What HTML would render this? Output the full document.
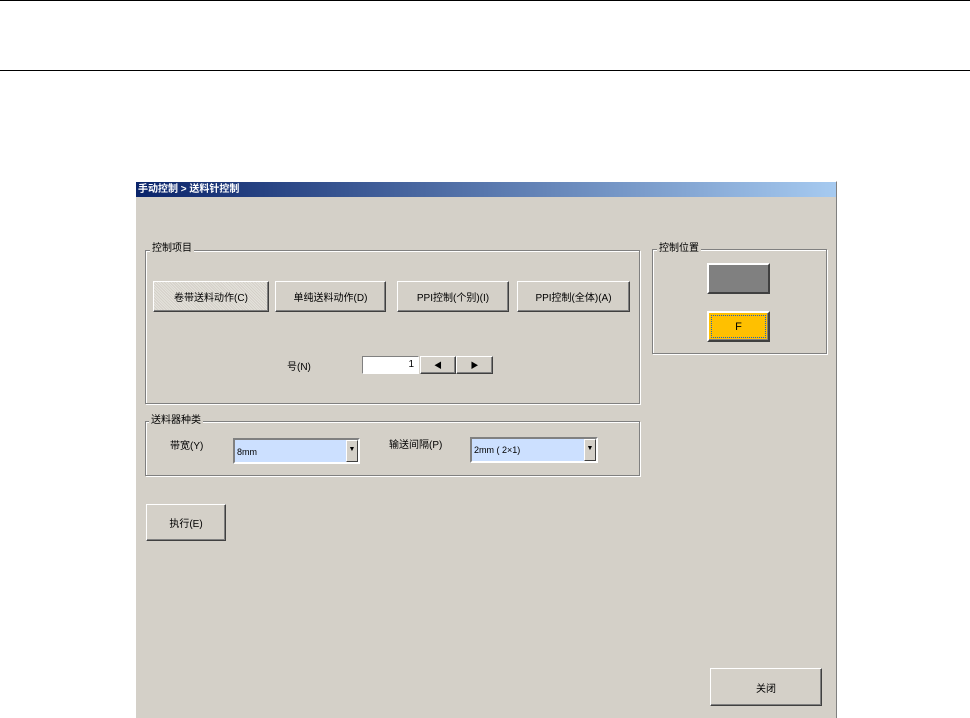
<!DOCTYPE html>
<html><head><meta charset="utf-8"><style>
*{margin:0;padding:0;box-sizing:border-box}
body{width:970px;height:718px;background:#fff;position:relative;overflow:hidden;font-family:"Liberation Sans","Noto Sans CJK SC",sans-serif;font-size:10px;color:#000}
.a{position:absolute}
.win{left:135px;top:181px;width:702px;height:537px;background:#d4d0c8;border-left:1px solid #fff;border-top:1px solid #fff;border-right:1px solid #808080}
.title{left:136px;top:182px;width:700px;height:15px;background:linear-gradient(90deg,#0a246a,#a6caf0);color:#fff;font-weight:bold;font-size:10px;line-height:15px;padding-left:2px}
.grp{border:1px solid #808080;box-shadow:1px 1px 0 #fff inset,1px 1px 0 #fff}
.lbl{background:#d4d0c8;padding:0 2px;line-height:12px}
.btn{background:#d4d0c8;border:1px solid;border-color:#fff #404040 #404040 #fff;box-shadow:inset -1px -1px 0 #808080;display:flex;align-items:center;justify-content:center;font-size:10px}
.combo{background:#cce0ff;border:2px solid;border-color:#808080 #fff #fff #808080;font-size:9px;line-height:20px;padding-left:2px}
.dd{position:absolute;right:0;top:0;width:12px;height:100%;background:#d4d0c8;border:1px solid;border-color:#fff #404040 #404040 #fff;font-size:7px;text-align:center;line-height:18px}
</style></head><body>
<div class="a" style="left:0;top:0;width:970px;height:1px;background:#000"></div>
<div class="a" style="left:0;top:70px;width:970px;height:1px;background:#000"></div>
<div class="a win"></div>
<div class="a title">手动控制 &gt; 送料针控制</div>

<div class="a grp" style="left:145px;top:250px;width:495px;height:154px"></div>
<div class="a lbl" style="left:150px;top:243px">控制项目</div>
<div class="a btn" style="left:153px;top:281px;width:116px;height:31px;background:repeating-linear-gradient(45deg,#e4e2dc 0 1px,#d4d0c8 1px 2px)">卷带送料动作(C)</div>
<div class="a btn" style="left:275px;top:281px;width:111px;height:31px">单纯送料动作(D)</div>
<div class="a btn" style="left:397px;top:281px;width:112px;height:31px">PPI控制(个别)(I)</div>
<div class="a btn" style="left:517px;top:281px;width:113px;height:31px">PPI控制(全体)(A)</div>
<div class="a" style="left:287px;top:358px">号(N)</div>
<div class="a" style="left:362px;top:356px;width:57px;height:18px;background:#fff;border:1px solid;border-color:#808080 #fff #fff #808080;text-align:right;padding-right:4px;line-height:15px">1</div>
<div class="a btn" style="left:420px;top:356px;width:36px;height:18px;font-size:8px">◀</div>
<div class="a btn" style="left:456px;top:356px;width:37px;height:18px;font-size:8px">▶</div>

<div class="a grp" style="left:145px;top:421px;width:495px;height:55px"></div>
<div class="a lbl" style="left:149px;top:415px">送料器种类</div>
<div class="a" style="left:170px;top:437px">带宽(Y)</div>
<div class="a combo" style="left:233px;top:438px;width:127px;height:26px;line-height:24px">8mm<div class="dd">▼</div></div>
<div class="a" style="left:389px;top:436px">输送间隔(P)</div>
<div class="a combo" style="left:470px;top:437px;width:128px;height:26px;line-height:22px">2mm ( 2×1)<div class="dd">▼</div></div>

<div class="a btn" style="left:146px;top:504px;width:80px;height:37px">执行(E)</div>

<div class="a grp" style="left:652px;top:249px;width:175px;height:105px"></div>
<div class="a lbl" style="left:657px;top:243px">控制位置</div>
<div class="a btn" style="left:707px;top:263px;width:63px;height:31px;background:#808080;border:2px solid;border-color:#fff #404040 #404040 #fff"></div>
<div class="a btn" style="left:707px;top:311px;width:63px;height:31px;background:#ffc000;border:2px solid;border-color:#fff #404040 #404040 #fff"><div style="border:1px dotted #2060c0;width:55px;height:23px;display:flex;align-items:center;justify-content:center;font-size:11px">F</div></div>

<div class="a btn" style="left:710px;top:668px;width:112px;height:38px">关闭</div>
</body></html>
